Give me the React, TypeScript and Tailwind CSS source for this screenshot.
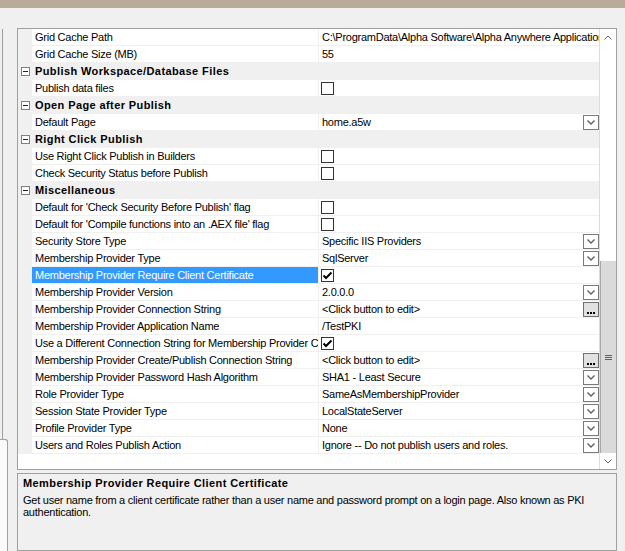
import React from 'react';

type Editor = 'none' | 'check' | 'checked' | 'dropdown' | 'ellipsis';

interface PropRow {
  kind: 'prop';
  label: string;
  value?: string;
  editor?: Editor;
  selected?: boolean;
}

interface CatRow {
  kind: 'cat';
  label: string;
}

type Row = PropRow | CatRow;

const rows: Row[] = [
  { kind: 'prop', label: 'Grid Cache Path', value: 'C:\\ProgramData\\Alpha Software\\Alpha Anywhere Application Server\\Cache' },
  { kind: 'prop', label: 'Grid Cache Size (MB)', value: '55' },
  { kind: 'cat', label: 'Publish Workspace/Database Files' },
  { kind: 'prop', label: 'Publish data files', editor: 'check' },
  { kind: 'cat', label: 'Open Page after Publish' },
  { kind: 'prop', label: 'Default Page', value: 'home.a5w', editor: 'dropdown' },
  { kind: 'cat', label: 'Right Click Publish' },
  { kind: 'prop', label: 'Use Right Click Publish in Builders', editor: 'check' },
  { kind: 'prop', label: 'Check Security Status before Publish', editor: 'check' },
  { kind: 'cat', label: 'Miscellaneous' },
  { kind: 'prop', label: "Default for 'Check Security Before Publish' flag", editor: 'check' },
  { kind: 'prop', label: "Default for 'Compile functions into an .AEX file' flag", editor: 'check' },
  { kind: 'prop', label: 'Security Store Type', value: 'Specific IIS Providers', editor: 'dropdown' },
  { kind: 'prop', label: 'Membership Provider Type', value: 'SqlServer', editor: 'dropdown' },
  { kind: 'prop', label: 'Membership Provider Require Client Certificate', editor: 'checked', selected: true },
  { kind: 'prop', label: 'Membership Provider Version', value: '2.0.0.0', editor: 'dropdown' },
  { kind: 'prop', label: 'Membership Provider Connection String', value: '<Click button to edit>', editor: 'ellipsis' },
  { kind: 'prop', label: 'Membership Provider Application Name', value: '/TestPKI' },
  { kind: 'prop', label: 'Use a Different Connection String for Membership Provider Create/Publish', editor: 'checked' },
  { kind: 'prop', label: 'Membership Provider Create/Publish Connection String', value: '<Click button to edit>', editor: 'ellipsis' },
  { kind: 'prop', label: 'Membership Provider Password Hash Algorithm', value: 'SHA1 - Least Secure', editor: 'dropdown' },
  { kind: 'prop', label: 'Role Provider Type', value: 'SameAsMembershipProvider', editor: 'dropdown' },
  { kind: 'prop', label: 'Session State Provider Type', value: 'LocalStateServer', editor: 'dropdown' },
  { kind: 'prop', label: 'Profile Provider Type', value: 'None', editor: 'dropdown' },
  { kind: 'prop', label: 'Users and Roles Publish Action', value: 'Ignore -- Do not publish users and roles.', editor: 'dropdown' },
];

function CheckBox({ checked }: { checked: boolean }) {
  return (
    <div className="ml-[2px] mt-[2px] h-[13px] w-[13px] shrink-0 border border-[#333333] bg-white">
      {checked && (
        <svg width="11" height="11" viewBox="0 0 11 11">
          <polyline points="1.5,5.5 4,8 9.5,2.5" fill="none" stroke="#000" strokeWidth="2" />
        </svg>
      )}
    </div>
  );
}

function DropButton() {
  return (
    <div className="mt-[1px] flex h-[15px] w-[16px] shrink-0 items-center justify-center border border-[#7a7a7a] bg-white">
      <svg width="8" height="5" viewBox="0 0 8 5">
        <polyline points="0.5,0.5 4,4 7.5,0.5" fill="none" stroke="#606060" strokeWidth="1.4" />
      </svg>
    </div>
  );
}

function EllipsisButton() {
  return (
    <div className="mt-[1px] flex h-[15px] w-[16px] shrink-0 items-end justify-center gap-[1px] border border-[#707070] bg-[#e1e1e1] pb-[2px]">
      <div className="h-[2px] w-[2px] bg-black" />
      <div className="h-[2px] w-[2px] bg-black" />
      <div className="h-[2px] w-[2px] bg-black" />
    </div>
  );
}

function PropertyRow({ row }: { row: PropRow }) {
  const editor = row.editor ?? 'none';
  return (
    <div className="flex h-[17px]">
      <div className="w-[14px] shrink-0 bg-[#f0f0f0]" />
      <div
        className={
          'w-[286px] shrink-0 overflow-hidden whitespace-nowrap border-b border-[#f0f0f0] pl-[3px] leading-[16px] ' +
          (row.selected ? 'bg-[#3399ff] text-white' : 'bg-white text-black')
        }
      >
        {row.label}
      </div>
      <div className="w-px shrink-0 bg-[#f0f0f0]" />
      <div className="flex w-[280px] shrink-0 border-b border-[#f0f0f0] bg-white">
        {(editor === 'check' || editor === 'checked') && <CheckBox checked={editor === 'checked'} />}
        {row.value !== undefined && (
          <div className="min-w-0 flex-1 overflow-hidden whitespace-nowrap pl-[3px] leading-[16px]">{row.value}</div>
        )}
        {editor === 'dropdown' && <DropButton />}
        {editor === 'ellipsis' && <EllipsisButton />}
      </div>
    </div>
  );
}

function CategoryRow({ row }: { row: CatRow }) {
  return (
    <div className="flex h-[17px] bg-[#f0f0f0]">
      <div className="flex w-[14px] shrink-0 items-center pl-[3px] pb-[1px]">
        <div className="flex h-[9px] w-[9px] items-center justify-center border border-[#808080] bg-white">
          <div className="h-px w-[5px] bg-[#222]" />
        </div>
      </div>
      <div className="pl-[3px] font-bold leading-[16px] tracking-[0.4px]">{row.label}</div>
    </div>
  );
}

function ScrollBar() {
  return (
    <div className="flex w-[17px] shrink-0 flex-col border-l border-[#dcdcdc] bg-white">
      <div className="flex h-[17px] shrink-0 items-center justify-center">
        <svg width="8" height="5" viewBox="0 0 8 5">
          <polyline points="0.5,4.5 4,1 7.5,4.5" fill="none" stroke="#606060" strokeWidth="1" />
        </svg>
      </div>
      <div className="h-[215px] shrink-0" />
      <div className="flex flex-1 flex-col items-center justify-center gap-[1px] border-l border-[#a8a8a8] bg-[#dadada]">
        <div className="h-px w-[7px] bg-[#606060]" />
        <div className="h-px w-[7px] bg-[#606060]" />
        <div className="h-px w-[7px] bg-[#606060]" />
      </div>
      <div className="flex h-[16px] shrink-0 items-center justify-center">
        <svg width="8" height="5" viewBox="0 0 8 5">
          <polyline points="0.5,0.5 4,4 7.5,0.5" fill="none" stroke="#606060" strokeWidth="1" />
        </svg>
      </div>
    </div>
  );
}

export default function App() {
  return (
    <div
      className="flex h-[551px] w-[625px] flex-col overflow-hidden bg-[#f0f0f0] text-[11px] tracking-[-0.25px] text-black"
      style={{ fontFamily: '"Liberation Sans", Arial, sans-serif' }}
    >
      <div className="h-[8px] shrink-0 bg-[#b9ab9c]" />
      <div className="flex flex-1">
        <div className="flex w-[17px] shrink-0 flex-col">
          <div className="h-[21px] shrink-0" />
          <div className="h-[410px] w-[3px] shrink-0 border-r border-[#a0a0a0]" />
          <div className="w-[8px] flex-1 rounded-tr-[3px] border-r border-t border-[#a0a0a0] bg-[#fafafa]" />
        </div>
        <div className="flex w-[600px] shrink-0 flex-col pt-[20px]">
          <div className="flex h-[442px] shrink-0 border border-[#a0a0a0] bg-white">
            <div className="w-[581px] shrink-0">
              {rows.map((row, i) =>
                row.kind === 'cat' ? <CategoryRow key={i} row={row} /> : <PropertyRow key={i} row={row} />
              )}
            </div>
            <ScrollBar />
          </div>
          <div className="mt-[3px] flex-1 border border-[#a0a0a0] bg-[#f0f0f0] pl-[5px] pt-[3px]">
            <div className="font-bold leading-[13px] tracking-[0.4px]">Membership Provider Require Client Certificate</div>
            <div className="mt-[4px] leading-[12px]">
              Get user name from a client certificate rather than a user name and password prompt on a login page. Also known as PKI
              <br />
              authentication.
            </div>
          </div>
        </div>
      </div>
    </div>
  );
}
